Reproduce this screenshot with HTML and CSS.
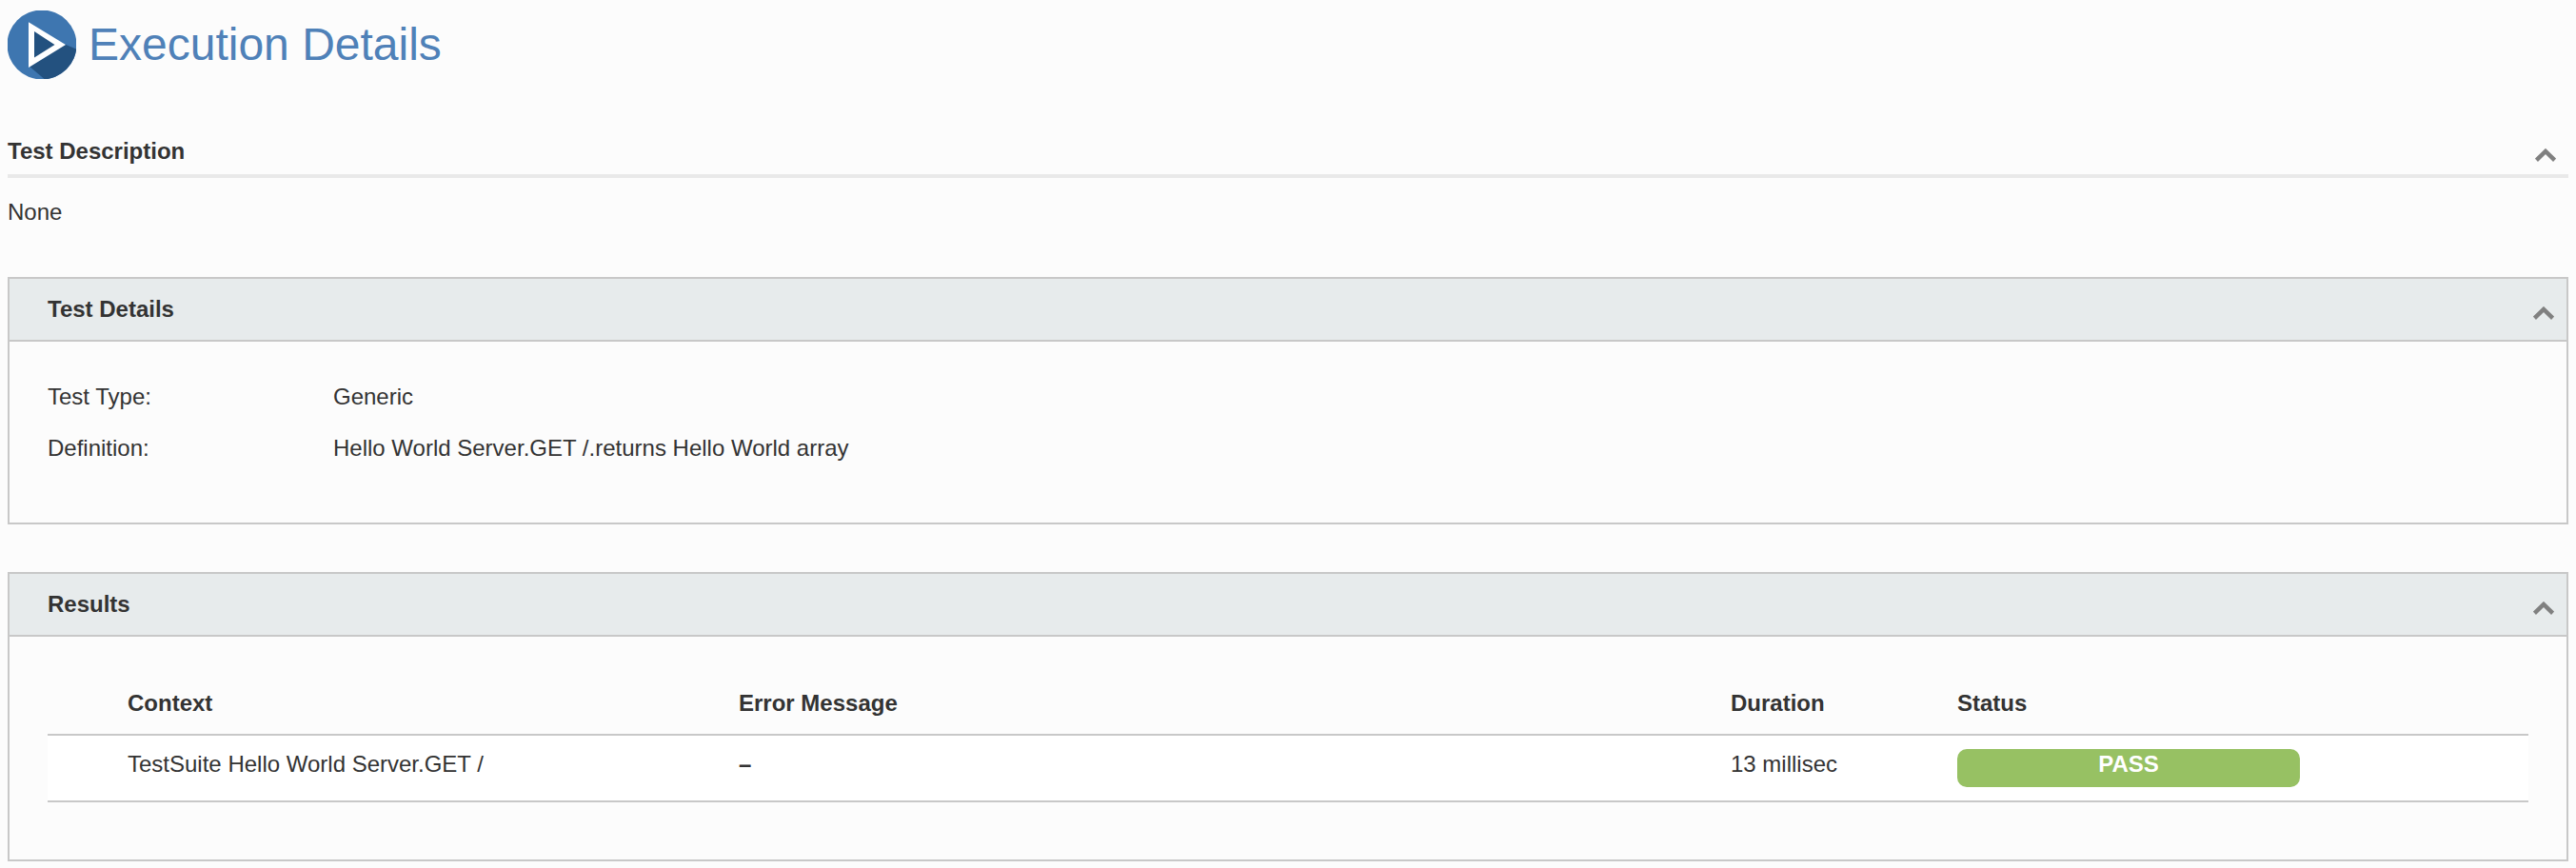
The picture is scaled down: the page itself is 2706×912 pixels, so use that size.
FILE: index.html
```html
<!DOCTYPE html>
<html lang="en">
<head>
    <meta charset="UTF-8">
    <title>Execution Details</title>
    <link rel="stylesheet" href="styles.css">
</head>
<body>
    <div class="page-header">
        <svg class="page-icon" viewBox="0 0 72 72">
            <defs>
                <clipPath id="disc"><circle cx="36" cy="36" r="36.5"/></clipPath>
            </defs>
            <g clip-path="url(#disc)">
                <rect width="72" height="72" fill="#3e76b0"/>
                <path d="M22,58 L60,35.5 L80,44 V80 H48 Z" fill="#23517f"/>
                <path d="M22,12.3 L61,36 L22,60 Z" fill="#fff"/>
                <path d="M28,22 L49.5,36 L28,49.5 Z" fill="#23517f"/>
            </g>
        </svg>
        <h1>Execution Details</h1>
    </div>

    <div class="description">
        <div class="description-header">
            <h2>Test Description</h2>
            <svg class="chevron" viewBox="0 0 22 14"><path d="M1.4,12.3 L11,3 L20.6,12.3"/></svg>
        </div>
        <p>None</p>
    </div>

    <div class="panel details">
        <div class="panel-header">
            <h2>Test Details</h2>
            <svg class="chevron" viewBox="0 0 22 14"><path d="M1.4,12.3 L11,3 L20.6,12.3"/></svg>
        </div>
        <dl>
            <dt>Test Type:</dt>
            <dd>Generic</dd>
            <dt>Definition:</dt>
            <dd>Hello World Server.GET /.returns Hello World array</dd>
        </dl>
    </div>

    <div class="panel results">
        <div class="panel-header">
            <h2>Results</h2>
            <svg class="chevron" viewBox="0 0 22 14"><path d="M1.4,12.3 L11,3 L20.6,12.3"/></svg>
        </div>
        <table>
            <thead>
                <tr>
                    <th class="context">Context</th>
                    <th class="error">Error Message</th>
                    <th class="duration">Duration</th>
                    <th class="status">Status</th>
                </tr>
            </thead>
            <tbody>
                <tr>
                    <td class="context">TestSuite Hello World Server.GET /</td>
                    <td class="empty">–</td>
                    <td>13 millisec</td>
                    <td><div class="badge">PASS</div></td>
                </tr>
            </tbody>
        </table>
    </div>
</body>
</html>
```
FILE: styles.css
```css
* {
    box-sizing: border-box;
}

body {
    font-family: Helvetica, "Liberation Sans", Arial, sans-serif;
    font-size: 24px;
    line-height: 31px;
    color: #333;
    background-color: #fcfcfc;
    margin: 0;
    padding: 11px 8px 0;
}

h1, h2, p, dl, dd {
    margin: 0;
}

h2 {
    font-size: 24px;
}

/* Page title */
.page-header {
    display: flex;
    align-items: center;
    height: 72px;
    gap: 13px;
}

.page-icon {
    width: 72px;
    height: 72px;
}

h1 {
    font-size: 48px;
    line-height: 72px;
    font-weight: normal;
    color: #4f81b8;
}

.chevron {
    width: 22px;
    height: 14px;
    fill: none;
    stroke: #808080;
    stroke-width: 4.5;
}

/* Description */
.description {
    height: 208px;
    padding-top: 60px;
}

.description-header {
    display: flex;
    justify-content: space-between;
    height: 44px;
    padding-right: 13px;
    border-bottom: 4px solid #e9e9e9;
}

.description-header .chevron {
    margin-top: 13px;
}

.description p {
    padding-top: 20px;
}

/* Panels */
.panel {
    border: 2px solid #c8c8c8;
}

.panel-header {
    display: flex;
    justify-content: space-between;
    height: 66px;
    padding: 16px 13px 0 40px;
    background-color: #e7ebec;
    border-bottom: 2px solid #c8c8c8;
}

.panel-header .chevron {
    margin-top: 13px;
}

.details {
    height: 260px;
    margin-bottom: 50px;
}

.results {
    height: 304px;
}

dl {
    display: grid;
    grid-template-columns: 300px 1fr;
    row-gap: 23px;
    padding: 42px 40px 0;
}

table {
    width: 2606px;
    margin: 31px 40px 0;
    table-layout: fixed;
    border-collapse: separate;
    border-spacing: 0;
}

th, td {
    padding: 0;
    text-align: left;
    vertical-align: top;
    border-bottom: 2px solid #c8c8c8;
}

th {
    height: 73px;
    padding-top: 23px;
}

td {
    height: 70px;
    padding-top: 14px;
    background-color: #fff;
}

.context {
    width: 726px;
    padding-left: 84px;
}

.error {
    width: 1042px;
}

.duration {
    width: 238px;
}

.empty {
    font-weight: bold;
}

.badge {
    width: 360px;
    height: 40px;
    color: #fff;
    font-weight: bold;
    text-align: center;
    background-color: #97c163;
    border-radius: 10px;
}
```
